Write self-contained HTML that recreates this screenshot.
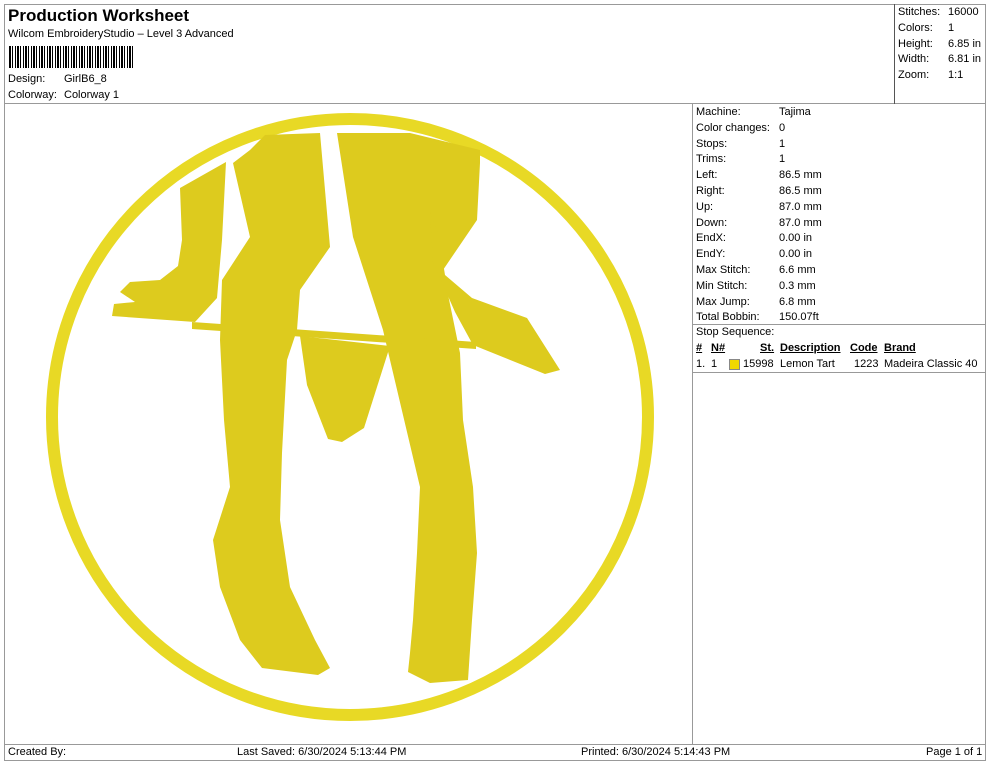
<!DOCTYPE html>
<html><head><style>
body{margin:0;width:990px;height:762px;background:#fff;font-family:"Liberation Sans",sans-serif;color:#000;position:relative;overflow:hidden}
.a{position:absolute;white-space:nowrap}
.f{font-size:11px}
.l{position:absolute;background:#999}
</style></head><body>
<div class="l" style="left:4px;top:4px;width:982px;height:1px"></div>
<div class="l" style="left:4px;top:4px;width:1px;height:757px"></div>
<div class="l" style="left:985px;top:4px;width:1px;height:757px"></div>
<div class="l" style="left:4px;top:103px;width:982px;height:1px"></div>
<div class="l" style="left:894px;top:4px;width:1px;height:100px;background:#555"></div>
<div class="l" style="left:692px;top:103px;width:1px;height:641px"></div>
<div class="l" style="left:4px;top:744px;width:982px;height:1px"></div>
<div class="l" style="left:4px;top:760px;width:982px;height:1px"></div>
<div class="l" style="left:692px;top:324px;width:294px;height:1px"></div>
<div class="l" style="left:692px;top:372px;width:294px;height:1px"></div>

<div class="a" style="left:8px;top:6px;font-size:17px;font-weight:bold">Production Worksheet</div>
<div class="a f" style="left:8px;top:28px">Wilcom EmbroideryStudio – Level 3 Advanced</div>
<div class="a" style="left:9px;top:46px;width:124px;height:22px;background:repeating-linear-gradient(90deg,#000 0 2px,#fff 2px 3px,#000 3px 4px,#fff 4px 6px,#000 6px 7px,#fff 7px 8px)"></div>
<div class="a f" style="left:8px;top:73px">Design:</div><div class="a f" style="left:64px;top:73px">GirlB6_8</div>
<div class="a f" style="left:8px;top:89px">Colorway:</div><div class="a f" style="left:64px;top:89px">Colorway 1</div>

<div class="a f" style="left:898px;top:5px;line-height:15.8px">Stitches:<br>Colors:<br>Height:<br>Width:<br>Zoom:</div>
<div class="a f" style="left:948px;top:5px;line-height:15.8px">16000<br>1<br>6.85 in<br>6.81 in<br>1:1</div>

<div class="a f" style="left:696px;top:105px;line-height:15.8px">Machine:<br>Color changes:<br>Stops:<br>Trims:<br>Left:<br>Right:<br>Up:<br>Down:<br>EndX:<br>EndY:<br>Max Stitch:<br>Min Stitch:<br>Max Jump:<br>Total Bobbin:</div>
<div class="a f" style="left:779px;top:105px;line-height:15.8px">Tajima<br>0<br>1<br>1<br>86.5 mm<br>86.5 mm<br>87.0 mm<br>87.0 mm<br>0.00 in<br>0.00 in<br>6.6 mm<br>0.3 mm<br>6.8 mm<br>150.07ft</div>
<div class="a f" style="left:696px;top:326px">Stop Sequence:</div>
<div class="a f" style="left:696px;top:342px;font-weight:bold;text-decoration:underline">#</div>
<div class="a f" style="left:711px;top:342px;font-weight:bold;text-decoration:underline">N#</div>
<div class="a f" style="left:760px;top:342px;font-weight:bold;text-decoration:underline">St.</div>
<div class="a f" style="left:780px;top:342px;font-weight:bold;text-decoration:underline">Description</div>
<div class="a f" style="left:850px;top:342px;font-weight:bold;text-decoration:underline">Code</div>
<div class="a f" style="left:884px;top:342px;font-weight:bold;text-decoration:underline">Brand</div>
<div class="a f" style="left:696px;top:358px">1.</div>
<div class="a f" style="left:711px;top:358px">1</div>
<div class="a" style="left:729px;top:359px;width:9px;height:9px;background:#f0d800;border:1px solid #888"></div>
<div class="a f" style="left:743px;top:358px">15998</div>
<div class="a f" style="left:780px;top:358px">Lemon Tart</div>
<div class="a f" style="left:854px;top:358px">1223</div>
<div class="a f" style="left:884px;top:358px">Madeira Classic 40</div>

<div class="a f" style="left:8px;top:746px">Created By:</div>
<div class="a f" style="left:237px;top:746px">Last Saved: 6/30/2024 5:13:44 PM</div>
<div class="a f" style="left:581px;top:746px">Printed: 6/30/2024 5:14:43 PM</div>
<div class="a f" style="left:926px;top:746px">Page 1 of 1</div>

<svg class="a" style="left:0;top:0" width="692" height="744">
<circle cx="350" cy="417" r="298" fill="none" stroke="#e8d925" stroke-width="12"/>
<g fill="#ddcb1e">
<path d="M180,188 L226,162 L222,240 L217,298 L195,322 L112,316 L114,304 L135,302 L120,292 L130,282 L160,280 L178,266 L182,240Z"/>
<path d="M233,163 L250,150 L265,135 L320,133 L330,247 L300,290 L297,330 L287,360 L282,453 L280,520 L290,587 L315,640 L330,668 L318,675 L262,668 L240,640 L220,587 L213,540 L230,487 L224,420 L220,340 L222,280 L250,237Z"/>
<path d="M337,133 L410,133 L480,150 L480,163 L477,220 L443,270 L460,353 L463,420 L473,487 L477,553 L472,620 L468,680 L430,683 L408,672 L410,653 L413,620 L417,553 L420,487 L390,360 L383,330 L353,237Z"/>
<path d="M430,212 L438,232 L445,275 L472,298 L527,318 L560,370 L545,374 L473,345 L455,312 L433,262Z"/>
<path d="M192,322 L476,342 L476,349 L192,329Z"/>
<path d="M300,336 L390,346 L364,428 L342,442 L328,439 L307,385Z"/>
</g>
</svg>
</body></html>
